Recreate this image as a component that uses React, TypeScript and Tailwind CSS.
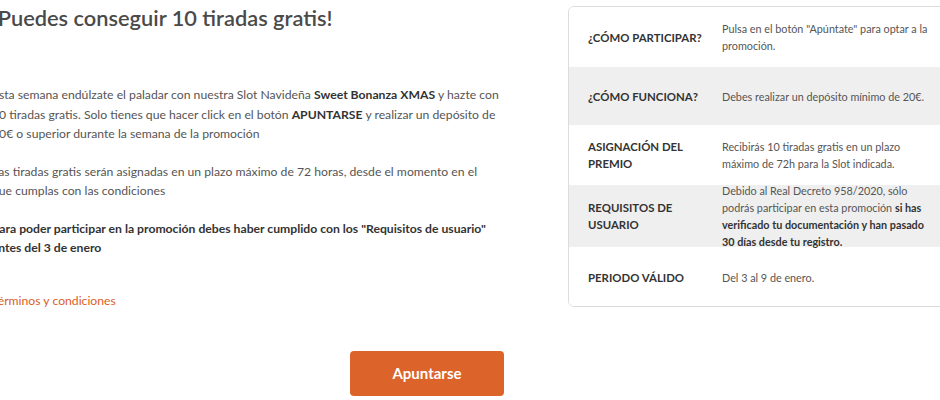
const rows = [
  {
    label: "¿CÓMO PARTICIPAR?",
    value: <>Pulsa en el botón "Apúntate" para optar a la promoción.</>,
    gray: false,
    h: "h-[60px]",
  },
  {
    label: "¿CÓMO FUNCIONA?",
    value: <>Debes realizar un depósito mínimo de 20€.</>,
    gray: true,
    h: "h-[58px]",
  },
  {
    label: "ASIGNACIÓN DEL PREMIO",
    value: <>Recibirás 10 tiradas gratis en un plazo máximo de 72h para la Slot indicada.</>,
    gray: false,
    h: "h-[60px]",
  },
  {
    label: "REQUISITOS DE USUARIO",
    value: (
      <>
        Debido al Real Decreto 958/2020, sólo podrás participar en esta promoción{" "}
        <b className="font-bold text-[#333]">si has verificado tu documentación y han pasado 30 días desde tu registro.</b>
      </>
    ),
    gray: true,
    h: "h-[62px]",
  },
  {
    label: "PERIODO VÁLIDO",
    value: <>Del 3 al 9 de enero.</>,
    gray: false,
    h: "h-[60px]",
  },
];

export default function App() {
  return (
    <div className="h-[400px] w-[940px] overflow-hidden bg-white font-['Lato',sans-serif]">
      <div className="ml-[-8px] flex w-[1000px] gap-[61px]">
        {/* Promo text */}
        <div className="w-[515px] shrink-0">
          <h1 className="mt-[4px] text-[21.8px] font-semibold leading-[28px] text-[#4a4a4a]">
            ¡Puedes conseguir 10 tiradas gratis!
          </h1>
          <div className="mt-[53px] space-y-[18px] text-[12.2px] leading-[19.5px] text-[#555]">
            <p>
              Esta semana endúlzate el paladar con nuestra Slot Navideña{" "}
              <b className="font-bold text-[#333]">Sweet Bonanza XMAS</b> y hazte con 10 tiradas gratis. Solo tienes que
              hacer click en el botón <b className="font-bold text-[#333]">APUNTARSE</b> y realizar un depósito de 20€ o
              superior durante la semana de la promoción
            </p>
            <p>
              Las tiradas gratis serán asignadas en un plazo máximo de 72 horas, desde el momento en el
              <br />
              que cumplas con las condiciones
            </p>
            <p className="font-bold text-[#333]">
              Para poder participar en la promoción debes haber cumplido con los "Requisitos de usuario" antes del 3 de
              enero
            </p>
          </div>
          <a href="#" className="mt-[34px] block text-[12.2px] text-[#d9602a]">
            Términos y condiciones
          </a>
        </div>

        {/* Summary card */}
        <div className="mt-[6px] h-[301px] w-[390px] shrink-0 overflow-hidden rounded-[6px] border border-[#dcdcdc]">
          {rows.map((r) => (
            <div
              key={r.label}
              className={`flex items-center pl-[19px] pr-[20px] ${r.h} ${r.gray ? "bg-[#efefef]" : "bg-white"}`}
            >
              <div className="w-[134px] shrink-0 pr-[12px] text-[11.4px] font-bold leading-[17px] text-[#333]">
                {r.label}
              </div>
              <div className="text-[10.8px] leading-[17px] text-[#555]">{r.value}</div>
            </div>
          ))}
        </div>
      </div>

      <div className="ml-[-8px] mt-[41px] flex w-[870px] justify-center">
        <button className="h-[45px] w-[154px] rounded-[4px] bg-[#dc6329] text-[15px] font-bold text-white">
          Apuntarse
        </button>
      </div>
    </div>
  );
}
